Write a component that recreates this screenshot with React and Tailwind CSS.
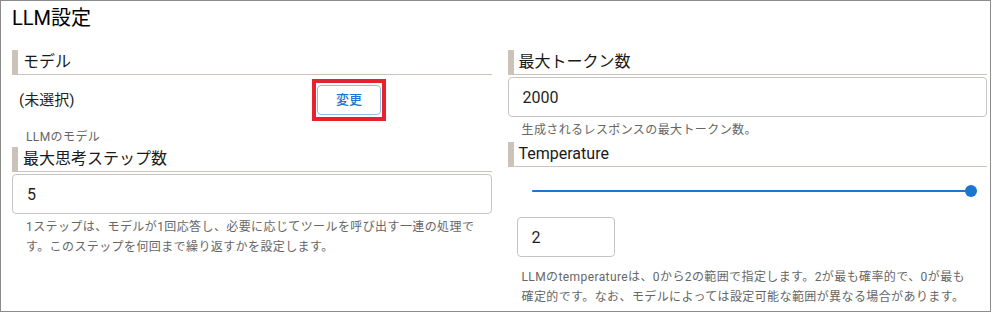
import { useState } from 'react';

const helperClass = 'px-[14px] text-[12px] leading-[20px] tracking-[0.4px] text-[#666666]';
const inputClass =
  'block h-[40px] w-full rounded-[4px] border border-[#c4c4c4] bg-white px-[14px] text-[16px] text-[#1f1f1f] outline-none';

function SectionHeader({ children }) {
  return (
    <div className="h-[25px] border-b border-l-[6px] border-[#cbc3b9] pl-[5px] text-[16px] leading-[24px] text-[#1a1a1a]">
      {children}
    </div>
  );
}

export default function App() {
  const [steps, setSteps] = useState('5');
  const [tokens, setTokens] = useState('2000');
  const [temperature, setTemperature] = useState('2');
  const ratio = Math.min(Math.max(Number(temperature) / 2, 0), 1) * 100;

  return (
    <div className="h-[312px] w-[991px] border border-[#8c8c8c] bg-white pl-[11px] pr-[3px] pt-[1px] font-['Roboto','Noto_Sans_CJK_JP',sans-serif]">
      <h2 className="h-[32px] text-[20px] leading-[32px] text-black">LLM設定</h2>

      <div className="mt-[16px] grid grid-cols-2 gap-x-[16px]">
        <div>
          <SectionHeader>モデル</SectionHeader>
          <div className="mt-[10px] flex h-[30px] items-center">
            <span className="w-[305px] pl-[7px] text-[15px] text-[#1f1f1f]">(未選択)</span>
            <div className="relative">
              <button className="h-[30px] w-[64px] rounded-[4px] border border-[#8fbde9] bg-white text-[13px] font-medium text-[#1976d2]">
                変更
              </button>
              <div className="pointer-events-none absolute -bottom-[6px] -left-[5px] -right-[5px] -top-[6px] border-4 border-[#e8212e]" />
            </div>
          </div>
          <p className={`${helperClass} mt-[12px] h-[20px]`}>LLMのモデル</p>

          <SectionHeader>最大思考ステップ数</SectionHeader>
          <input className={`${inputClass} mt-[2px]`} value={steps} onChange={(event) => setSteps(event.target.value)} />
          <p className={`${helperClass} mt-[3px]`}>
            1ステップは、モデルが1回応答し、必要に応じてツールを呼び出す一連の処理です。このステップを何回まで繰り返すかを設定します。
          </p>
        </div>

        <div>
          <SectionHeader>最大トークン数</SectionHeader>
          <input className={`${inputClass} mt-[2px]`} value={tokens} onChange={(event) => setTokens(event.target.value)} />
          <p className={`${helperClass} mt-[3px] h-[20px]`}>生成されるレスポンスの最大トークン数。</p>

          <div className="mt-[2px]">
            <SectionHeader>Temperature</SectionHeader>
          </div>
          <div className="flex h-[48px] items-center pl-[24px] pr-[16px]">
            <div className="relative h-[2px] w-full rounded-full bg-[#b9d4ef]">
              <div className="h-[2px] rounded-full bg-[#1976d2]" style={{ width: `${ratio}%` }} />
              <div
                className="absolute top-1/2 h-[12px] w-[12px] -translate-x-1/2 -translate-y-1/2 rounded-full bg-[#1976d2]"
                style={{ left: `${ratio}%` }}
              />
            </div>
          </div>
          <input
            className={`${inputClass} ml-[9px] mt-[2px] !w-[98px]`}
            value={temperature}
            onChange={(event) => setTemperature(event.target.value)}
          />
          <p className={`${helperClass} mt-[10px]`}>
            LLMのtemperatureは、0から2の範囲で指定します。2が最も確率的で、0が最も確定的です。なお、モデルによっては設定可能な範囲が異なる場合があります。
          </p>
        </div>
      </div>
    </div>
  );
}
